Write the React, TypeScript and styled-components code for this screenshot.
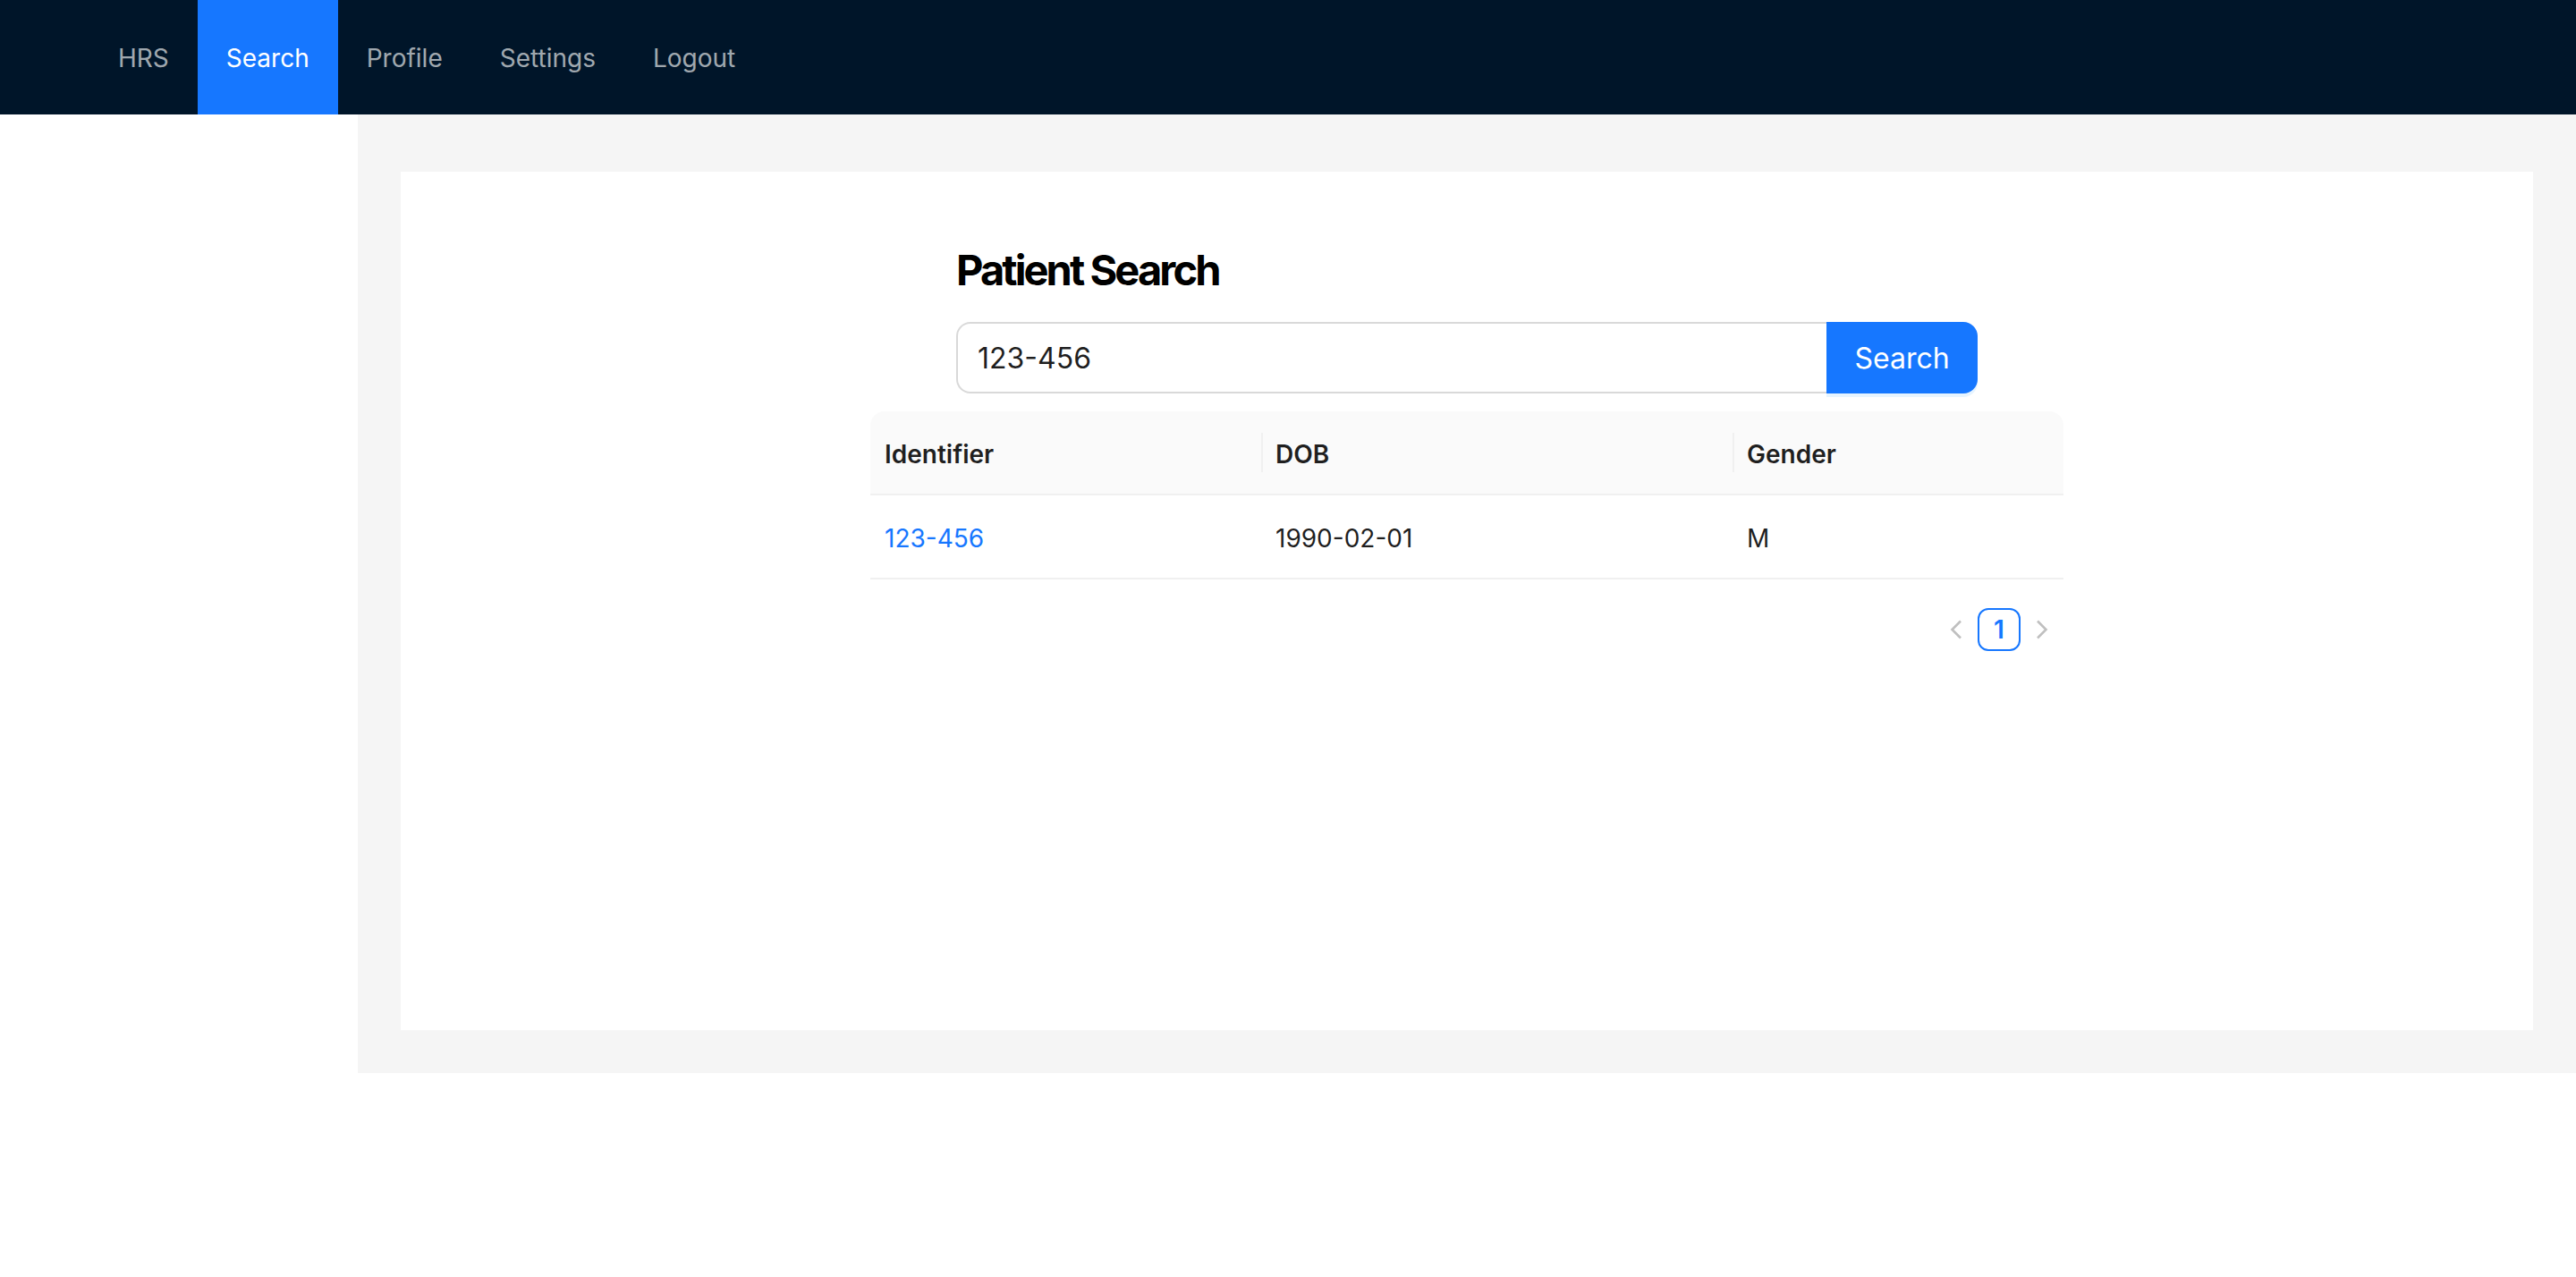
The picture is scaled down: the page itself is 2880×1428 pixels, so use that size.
import React from "react";
import styled, { createGlobalStyle } from "styled-components";

const GlobalStyle = createGlobalStyle`
  html, body {
    margin: 0;
    padding: 0;
    background: #ffffff;
    font-family: Inter, "Noto Sans", "Liberation Sans", sans-serif;
  }
  * { box-sizing: border-box; }
`;

const Page = styled.div`
  display: flex;
  flex-direction: column;
  width: 100%;
`;

const TopBar = styled.header`
  height: 128px;
  background: #001529;
  display: flex;
  align-items: stretch;
  padding: 0 100px;
`;

const NavItem = styled.a<{ $active?: boolean }>`
  display: flex;
  align-items: center;
  padding: 2px 32px 0 32px;
  font-size: 28px;
  font-weight: 400;
  letter-spacing: 0;
  text-decoration: none;
  color: ${(p) => (p.$active ? "#ffffff" : "rgba(255,255,255,0.65)")};
  background: ${(p) => (p.$active ? "#1677ff" : "transparent")};
  cursor: pointer;
`;

const Body = styled.div`
  display: flex;
  height: 1072px;
`;

const Sider = styled.aside`
  width: 400px;
  flex: 0 0 400px;
  background: #ffffff;
`;

const Main = styled.main`
  flex: 1;
  background: #f5f5f5;
  padding: 64px 48px 48px 48px;
  display: flex;
`;

const Card = styled.section`
  flex: 1;
  background: #ffffff;
  padding-top: 78px;
  display: flex;
  flex-direction: column;
  align-items: center;
`;

const SearchBlock = styled.div`
  width: 1142px;
  display: flex;
  flex-direction: column;
`;

const Title = styled.h3`
  margin: 0 0 26px 0;
  font-size: 47px;
  line-height: 64px;
  font-weight: 700;
  letter-spacing: -2.9px;
  color: #000000;
`;

const SearchRow = styled.div`
  display: flex;
  height: 80px;
`;

const SearchInput = styled.input`
  flex: 1;
  height: 80px;
  border: 2px solid #d9d9d9;
  border-right: none;
  border-radius: 16px 0 0 16px;
  padding: 0 22px;
  font-family: inherit;
  font-size: 32px;
  color: rgba(0, 0, 0, 0.88);
  outline: none;
  background: #fff;
`;

const SearchButton = styled.button`
  width: 169px;
  height: 80px;
  border: none;
  border-radius: 0 16px 16px 0;
  background: #1677ff;
  color: #ffffff;
  font-family: inherit;
  font-size: 32px;
  font-weight: 400;
  box-shadow: 0 4px 0 rgba(5, 145, 255, 0.1);
  cursor: pointer;
`;

const TableWrap = styled.div`
  width: 1334px;
  margin-top: 20px;
  display: flex;
  flex-direction: column;
`;

const Table = styled.table`
  width: 100%;
  border-collapse: separate;
  border-spacing: 0;
  table-layout: fixed;
  font-size: 28px;
  color: rgba(0, 0, 0, 0.88);
`;

const HeadCell = styled.th<{ $w: number }>`
  position: relative;
  width: ${(p) => p.$w}px;
  height: 94px;
  padding: 3px 16px 0 16px;
  text-align: left;
  font-weight: 600;
  background: #fafafa;
  border-bottom: 2px solid #f0f0f0;
  &:first-child { border-top-left-radius: 16px; }
  &:last-child { border-top-right-radius: 16px; }
  &:not(:first-child)::before {
    content: "";
    position: absolute;
    left: 0;
    top: 50%;
    transform: translateY(-50%);
    width: 2px;
    height: 44px;
    background: #f0f0f0;
  }
`;

const Cell = styled.td`
  height: 94px;
  padding: 3px 16px 0 16px;
  border-bottom: 2px solid #f0f0f0;
  font-weight: 400;
`;

const IdLink = styled.a`
  color: #1677ff;
  text-decoration: none;
`;

const Pager = styled.div`
  display: flex;
  justify-content: flex-end;
  margin-top: 32px;
`;

const PagerArrow = styled.span`
  width: 48px;
  height: 48px;
  display: flex;
  align-items: center;
  justify-content: center;
`;

const PagerItem = styled.span`
  width: 48px;
  height: 48px;
  display: flex;
  align-items: center;
  justify-content: center;
  border: 2px solid #1677ff;
  border-radius: 12px;
  color: #1677ff;
  font-size: 28px;
  font-weight: 600;
`;

const Chevron = ({ dir }: { dir: "left" | "right" }) => (
  <svg width="14" height="22" viewBox="0 0 14 22">
    <polyline
      points={dir === "left" ? "12,1.5 2.5,11 12,20.5" : "2,1.5 11.5,11 2,20.5"}
      fill="none"
      stroke="rgba(0,0,0,0.25)"
      strokeWidth="2.6"
    />
  </svg>
);

const rows = [{ id: "123-456", dob: "1990-02-01", gender: "M" }];

export default function App() {
  return (
    <Page>
      <GlobalStyle />
      <TopBar>
        <NavItem>HRS</NavItem>
        <NavItem $active>Search</NavItem>
        <NavItem>Profile</NavItem>
        <NavItem>Settings</NavItem>
        <NavItem>Logout</NavItem>
      </TopBar>
      <Body>
        <Sider />
        <Main>
          <Card>
            <SearchBlock>
              <Title>Patient Search</Title>
              <SearchRow>
                <SearchInput defaultValue="123-456" />
                <SearchButton>Search</SearchButton>
              </SearchRow>
            </SearchBlock>
            <TableWrap>
              <Table>
                <thead>
                  <tr>
                    <HeadCell $w={437}>Identifier</HeadCell>
                    <HeadCell $w={527}>DOB</HeadCell>
                    <HeadCell $w={370}>Gender</HeadCell>
                  </tr>
                </thead>
                <tbody>
                  {rows.map((r) => (
                    <tr key={r.id}>
                      <Cell>
                        <IdLink>{r.id}</IdLink>
                      </Cell>
                      <Cell>{r.dob}</Cell>
                      <Cell>{r.gender}</Cell>
                    </tr>
                  ))}
                </tbody>
              </Table>
              <Pager>
                <PagerArrow>
                  <Chevron dir="left" />
                </PagerArrow>
                <PagerItem>1</PagerItem>
                <PagerArrow>
                  <Chevron dir="right" />
                </PagerArrow>
              </Pager>
            </TableWrap>
          </Card>
        </Main>
      </Body>
    </Page>
  );
}
